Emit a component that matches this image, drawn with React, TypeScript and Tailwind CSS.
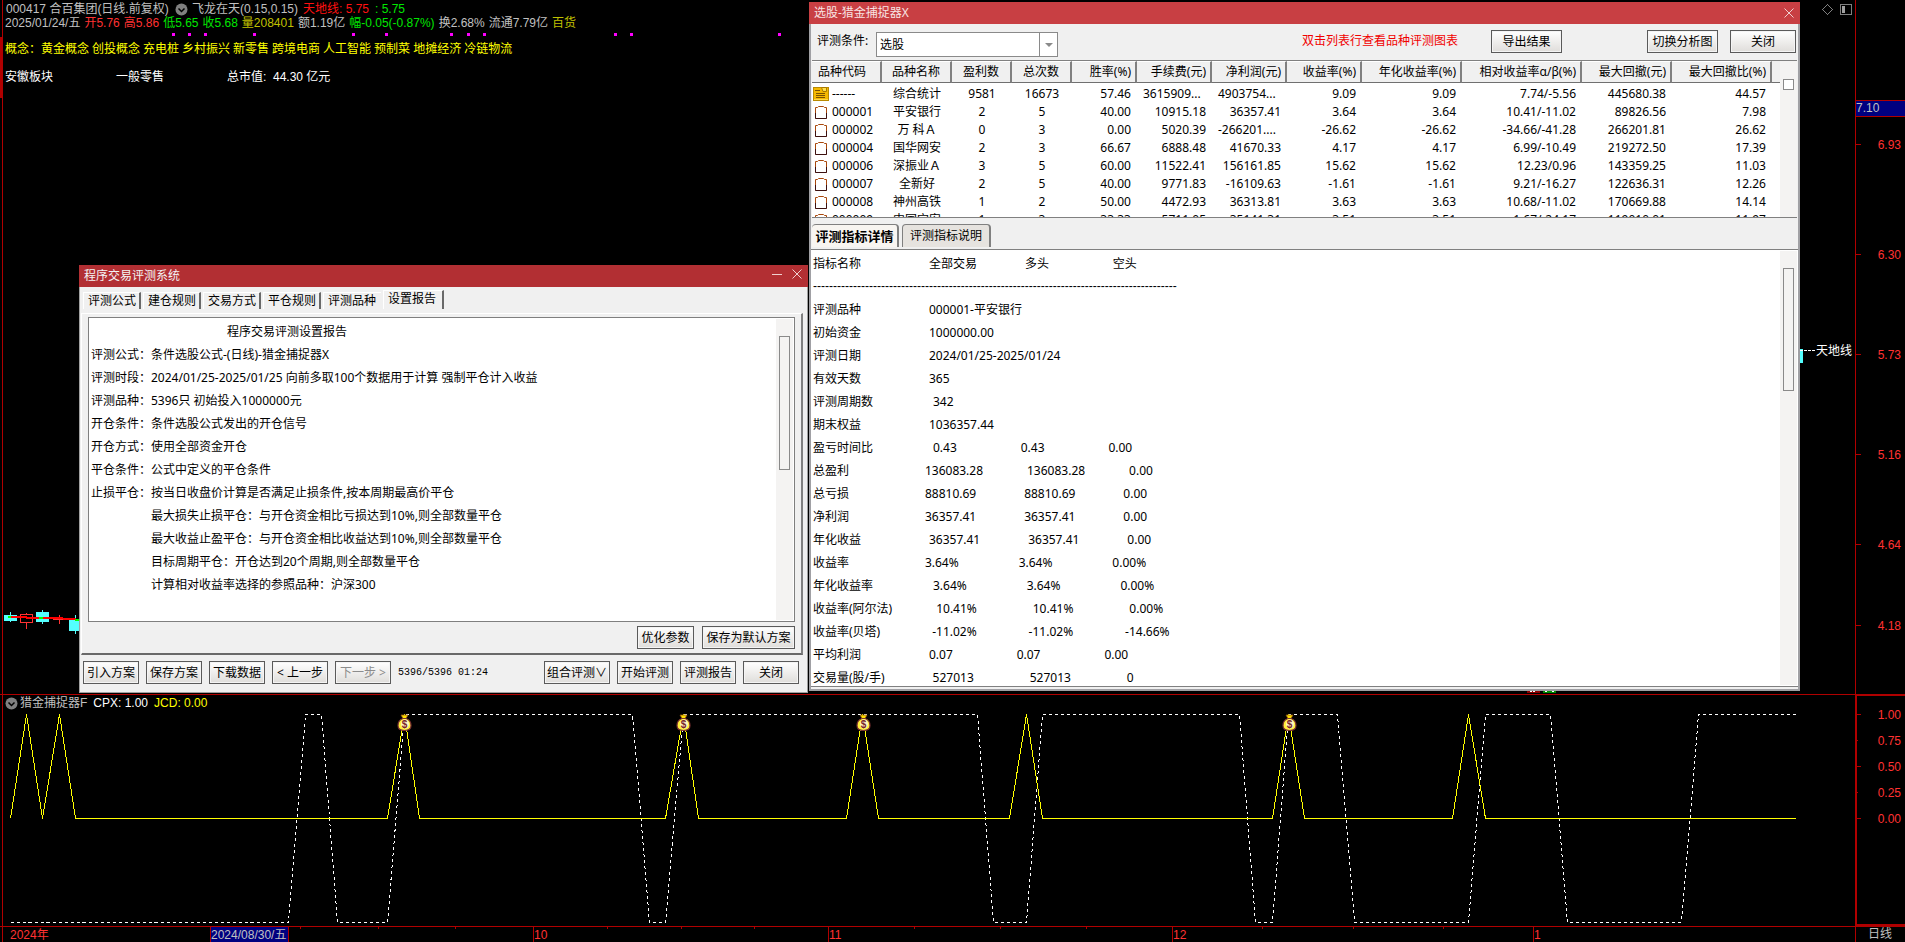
import React from 'react';
import clsx from 'clsx';

const priceTicks = [
  { y: 144, label: '6.93' },
  { y: 254, label: '6.30' },
  { y: 354, label: '5.73' },
  { y: 454, label: '5.16' },
  { y: 544, label: '4.64' },
  { y: 625, label: '4.18' },
];

const signalTicks = [
  { y: 20, label: '1.00', size: 5 },
  { y: 46, label: '0.75', size: 2 },
  { y: 72, label: '0.50', size: 5 },
  { y: 98, label: '0.25', size: 2 },
  { y: 124, label: '0.00', size: 5 },
];

const dots = [172, 188, 204, 253, 352, 385, 450, 467, 483, 614, 630, 778];

const jcdLine =
  '10,124 26,20 42,124 59,20 75,124 387,124 404,20 419,124 665,124 683,20 698,124 846,124 862,20 878,124 1009,124 1026,20 1042,124 1272,124 1288,20 1304,124 1452,124 1468,20 1485,124 1795,124';

const cpxLine =
  '10,228 288,228 305,20 321,20 337,228 387,228 404,20 632,20 649,228 665,228 683,20 977,20 993,228 1026,228 1042,20 1239,20 1255,228 1272,228 1288,20 1337,20 1354,228 1468,228 1485,20 1550,20 1567,228 1681,228 1698,20 1795,20';

const bags = [404, 683, 863, 1289];

const minorTicks = [300, 378, 455, 607, 681, 754, 914, 1000, 1086, 1262, 1353, 1443];
const months = [
  { x: 533, label: '10' },
  { x: 828, label: '11' },
  { x: 1172, label: '12' },
  { x: 1533, label: '1' },
];

const concepts = ['黄金概念', '创投概念', '充电桩', '乡村振兴', '新零售', '跨境电商', '人工智能', '预制菜', '地摊经济', '冷链物流'];

const quote = [
  { text: '2025/01/24/五', color: 'text-[#c0c0c0]' },
  { text: '开5.76', color: 'text-[#ff3232]' },
  { text: '高5.86', color: 'text-[#ff3232]' },
  { text: '低5.65', color: 'text-[#00e600]' },
  { text: '收5.68', color: 'text-[#00e600]' },
  { text: '量208401', color: 'text-[#c0c000]' },
  { text: '额1.19亿', color: 'text-[#c0c0c0]' },
  { text: '幅-0.05(-0.87%)', color: 'text-[#00e600]' },
  { text: '换2.68%', color: 'text-[#c0c0c0]' },
  { text: '流通7.79亿', color: 'text-[#c0c0c0]' },
  { text: '百货', color: 'text-[#c0c000]' },
];

const wizardTabs = ['评测公式', '建仓规则', '交易方式', '平仓规则', '评测品种', '设置报告'];

const settings = [
  '评测公式：条件选股公式-(日线)-猎金捕捉器X',
  '评测时段：2024/01/25-2025/01/25 向前多取100个数据用于计算 强制平仓计入收益',
  '评测品种：5396只 初始投入1000000元',
  '开仓条件：条件选股公式发出的开仓信号',
  '开仓方式：使用全部资金开仓',
  '平仓条件：公式中定义的平仓条件',
  '止损平仓：按当日收盘价计算是否满足止损条件,按本周期最高价平仓',
];

const stopRules = [
  '最大损失止损平仓：与开仓资金相比亏损达到10%,则全部数量平仓',
  '最大收益止盈平仓：与开仓资金相比收益达到10%,则全部数量平仓',
  '目标周期平仓：开仓达到20个周期,则全部数量平仓',
  '计算相对收益率选择的参照品种：沪深300',
];

const columns = [
  { title: '品种代码', width: 'w-[70px]', align: 'text-left' },
  { title: '品种名称', width: 'w-[70px]', align: 'text-center' },
  { title: '盈利数', width: 'w-[60px]', align: 'text-center' },
  { title: '总次数', width: 'w-[60px]', align: 'text-center' },
  { title: '胜率(%)', width: 'w-[65px]', align: 'text-right' },
  { title: '手续费(元)', width: 'w-[75px]', align: 'text-right' },
  { title: '净利润(元)', width: 'w-[75px]', align: 'text-right' },
  { title: '收益率(%)', width: 'w-[75px]', align: 'text-right' },
  { title: '年化收益率(%)', width: 'w-[100px]', align: 'text-right' },
  { title: '相对收益率α/β(%)', width: 'w-[120px]', align: 'text-right' },
  { title: '最大回撤(元)', width: 'w-[90px]', align: 'text-right' },
  { title: '最大回撤比(%)', width: 'w-[100px]', align: 'text-right' },
];

const rows = [
  ['------', '综合统计', '9581', '16673', '57.46', '3615909...', '4903754...', '9.09', '9.09', '7.74/-5.56', '445680.38', '44.57'],
  ['000001', '平安银行', '2', '5', '40.00', '10915.18', '36357.41', '3.64', '3.64', '10.41/-11.02', '89826.56', '7.98'],
  ['000002', '万 科Ａ', '0', '3', '0.00', '5020.39', '-266201....', '-26.62', '-26.62', '-34.66/-41.28', '266201.81', '26.62'],
  ['000004', '国华网安', '2', '3', '66.67', '6888.48', '41670.33', '4.17', '4.17', '6.99/-10.49', '219272.50', '17.39'],
  ['000006', '深振业Ａ', '3', '5', '60.00', '11522.41', '156161.85', '15.62', '15.62', '12.23/0.96', '143359.25', '11.03'],
  ['000007', '全新好', '2', '5', '40.00', '9771.83', '-16109.63', '-1.61', '-1.61', '9.21/-16.27', '122636.31', '12.26'],
  ['000008', '神州高铁', '1', '2', '50.00', '4472.93', '36313.81', '3.63', '3.63', '10.68/-11.02', '170669.88', '14.14'],
  ['000009', '中国宝安', '1', '3', '33.33', '5711.05', '35141.31', '3.51', '3.51', '1.67/-24.17', '119010.01', '11.97'],
];

const details = [
  ['指标名称', '全部交易', '多头', '空头'],
  ['-'.repeat(91)],
  ['评测品种', '000001-平安银行'],
  ['初始资金', '1000000.00'],
  ['评测日期', '2024/01/25-2025/01/24'],
  ['有效天数', '365'],
  ['评测周期数', '342'],
  ['期末权益', '1036357.44'],
  ['盈亏时间比', '0.43', '0.43', '0.00'],
  ['总盈利', '136083.28', '136083.28', '0.00'],
  ['总亏损', '88810.69', '88810.69', '0.00'],
  ['净利润', '36357.41', '36357.41', '0.00'],
  ['年化收益', '36357.41', '36357.41', '0.00'],
  ['收益率', '3.64%', '3.64%', '0.00%'],
  ['年化收益率', '3.64%', '3.64%', '0.00%'],
  ['收益率(阿尔法)', '10.41%', '10.41%', '0.00%'],
  ['收益率(贝塔)', '-11.02%', '-11.02%', '-14.66%'],
  ['平均利润', '0.07', '0.07', '0.00'],
  ['交易量(股/手)', '527013', '527013', '0'],
];

// CJK characters take two cells, the fields are padded like %-25s / %-20s
const cells = (s: string) => [...s].reduce((n, c) => n + (c.charCodeAt(0) > 255 ? 2 : 1), 0);
const pad = (s: string, n: number) => s + '\u2004'.repeat(Math.max(0, n - cells(s)));
const formatLine = (line: string[]) =>
  line.map((s, i) => (i === line.length - 1 ? s : pad(s, i === 0 ? 25 : 20))).join('');

const Btn: React.FC<React.ButtonHTMLAttributes<HTMLButtonElement>> = ({ className, ...props }) => (
  <button
    type="button"
    className={clsx(
      'h-[23px] shrink-0 border border-[#5a5a5a] bg-linear-to-b from-white to-[#dfddda] text-center leading-[20px] whitespace-nowrap text-black ring-1 ring-inset ring-[#f4f4f4] disabled:text-[#8c8c8c]',
      className
    )}
    {...props}
  />
);

const Chevron = () => (
  <svg width="13" height="13" viewBox="0 0 13 13" className="shrink-0">
    <circle cx="6.5" cy="6.5" r="6" fill="#808080" />
    <path d="M3.5 5.5 L6.5 8.5 L9.5 5.5" fill="none" stroke="#000" strokeWidth="1.5" />
  </svg>
);

const CloseIcon = () => (
  <svg width="10" height="10" viewBox="0 0 10 10">
    <path d="M0.5 0.5 L9.5 9.5 M9.5 0.5 L0.5 9.5" stroke="#f0d0d0" strokeWidth="1" />
  </svg>
);

const SummaryIcon = () => (
  <svg width="16" height="14" viewBox="0 0 16 14" className="shrink-0">
    <rect x="0.5" y="0.5" width="15" height="13" fill="#f5b800" stroke="#b98a00" />
    <path d="M8.5 0.5 H13.5 V4.5 H10 Z" fill="#ffe04a" stroke="#a87800" />
    <path d="M2 3.5 H7 M3 6.5 H12 M3 8.5 H12 M3 10.5 H12" stroke="#7a5200" />
    <path d="M1 12.5 H15" stroke="#ffd84a" />
  </svg>
);

const ClipIcon = () => (
  <svg width="16" height="14" viewBox="0 0 16 14" className="shrink-0">
    <path d="M2.5 13.5 V2.5 H4.5 L5.5 1.5 H10.5 L11.5 2.5 H13.5 V13.5" fill="#fff" stroke="#a8480c" />
    <path d="M2.5 8 V13.5 H13.5 V8" fill="none" stroke="#3c1010" />
  </svg>
);

const MoneyBag = ({ x }: { x: number }) => (
  <g transform={`translate(${x - 6.5} 20)`}>
    <path d="M3.5 1 H10.5 L8.5 4.5 H5.5 Z" fill="#ffe000" stroke="#8a5010" strokeWidth="0.8" />
    <path d="M5.5 4.5 C2.5 5.5 0.5 8.5 0.5 11.5 C0.5 15 3 16.5 7 16.5 C11 16.5 13.5 15 13.5 11.5 C13.5 8.5 11.5 5.5 8.5 4.5 Z" fill="#fff03c" stroke="#7a3030" strokeWidth="1.2" />
    <ellipse cx="7.5" cy="10" rx="4" ry="4.5" fill="#fff4c4" />
    <text x="7" y="14" textAnchor="middle" fontSize="10" fontWeight="bold" fill="#7a2828">$</text>
  </g>
);

const MainChart = () => (
  <section className="flex min-h-0 flex-1">
    <div className="relative min-w-0 flex-1">
      <svg className="absolute inset-0 h-full w-full" shapeRendering="crispEdges">
        <rect x="0" y="37" width="2" height="61" fill="#b00000" />
        <rect x="2" y="0" width="1" height="694" fill="#b00000" />
        {dots.map(x => (
          <rect key={x} x={x} y="33" width="3" height="3" fill="#ff00ff" />
        ))}
        {/* candles */}
        <rect x="10" y="612" width="1" height="10" fill="#54ffff" />
        <rect x="4" y="615" width="13" height="6" fill="#54ffff" />
        <path d="M26.5 613 V614 M26.5 622 V629" stroke="#ff3232" />
        <rect x="20.5" y="614.5" width="12" height="8" fill="none" stroke="#ff3232" />
        <rect x="42" y="610" width="1" height="14" fill="#54ffff" />
        <rect x="36" y="612" width="13" height="10" fill="#54ffff" />
        <path d="M53 619.5 H66 M59.5 615 V624" stroke="#ff3232" />
        <rect x="75" y="615" width="1" height="19" fill="#54ffff" />
        <rect x="69" y="619" width="13" height="12" fill="#54ffff" />
        <path d="M10 617 H26 L27 618 H49 L76 619" fill="none" stroke="#ff0000" strokeWidth="2" />
        <path d="M8 617 H11 M39 618 H43 M75 620 H79" stroke="#00ff00" strokeWidth="2" />
        <rect x="1800" y="349" width="3" height="14" fill="#54ffff" />
        <path d="M1800 350.5 H1815" stroke="#fff" strokeDasharray="3 1" />
        <text x="1816" y="355" fill="#fff">天地线</text>
        <rect x="1527" y="690" width="13" height="3" fill="#8b0000" />
        <rect x="1543" y="690" width="13" height="3" fill="#008b00" />
        <path d="M1530 691.5 H1535 M1545 691.5 H1548 M1552 691.5 H1555" stroke="#fff" strokeDasharray="2 1" />
        {/* toolbar glyphs */}
        <g fill="none" stroke="#808080">
          <path d="M1827.5 4.5 L1832.5 9.5 L1827.5 14.5 L1822.5 9.5 Z" />
          <rect x="1840.5" y="4.5" width="11" height="10" rx="1" strokeWidth="1.5" />
        </g>
        <rect x="1842" y="6" width="3" height="7" fill="#a0a0a0" />
      </svg>

      <header className="relative pl-[5px] pt-0.5 leading-[14px] whitespace-nowrap">
        <div className="flex items-center pl-px">
          <span className="w-[169px] text-[#c0c0c0]">000417 合百集团(日线.前复权)</span>
          <Chevron />
          <span className="w-[115px] pl-1 text-[#c0c0c0]">飞龙在天(0.15,0.15)</span>
          <span className="w-[72px] text-[#ff1010]">天地线: 5.75</span>
          <span className="text-[#00e600]">: 5.75</span>
        </div>
        <div className="flex gap-1">
          {quote.map(q => (
            <span key={q.text} className={q.color}>{q.text}</span>
          ))}
        </div>
        <div className="mt-3 flex gap-[3px] text-[#ffff00]">
          <span className="w-[33px]">概念：</span>
          {concepts.map(c => (
            <span key={c}>{c}</span>
          ))}
        </div>
        <div className="mt-3.5 flex text-white">
          <span className="w-[111px]">安徽板块</span>
          <span className="w-[111px]">一般零售</span>
          <span>总市值:&nbsp; 44.30 亿元</span>
        </div>
      </header>
    </div>

    <svg className="w-[50px] shrink-0 self-stretch" shapeRendering="crispEdges">
      <rect x="0" y="0" width="1" height="100%" fill="#b00000" />
      <rect x="1" y="100" width="49" height="17" fill="#000080" />
      <path d="M0 100.5 H50 M0 116.5 H50" stroke="#b00000" />
      <text x="1" y="112" fill="#c0c0c0">7.10</text>
      {priceTicks.map(t => (
        <g key={t.label}>
          <rect x="1" y={t.y} width="5" height="1" fill="#b00000" />
          <text x="46" y={t.y + 5} textAnchor="end" fill="#ff3232">{t.label}</text>
        </g>
      ))}
    </svg>
  </section>
);

const SignalChart = () => (
  <section className="flex h-[232px] shrink-0">
    <div className="relative min-w-0 flex-1 border-t border-[#b00000]">
      <svg className="absolute inset-x-0 -top-px h-[232px] w-full">
        <rect x="2" y="0" width="1" height="232" fill="#b00000" />
        <polyline points={cpxLine} transform="translate(0.5 0.5)" fill="none" stroke="#fff" strokeDasharray="3 3" shapeRendering="crispEdges" />
        <polyline points={jcdLine} transform="translate(0.5 0.5)" fill="none" stroke="#ffff00" shapeRendering="crispEdges" />
        {bags.map(x => (
          <MoneyBag key={x} x={x} />
        ))}
      </svg>
      <div className="relative flex items-center gap-1.5 pt-px pl-[5px] leading-[15px] whitespace-nowrap">
        <span className="flex items-center gap-0.5 text-[#c0c0c0]">
          <Chevron />
          猎金捕捉器F
        </span>
        <span className="text-white">CPX: 1.00</span>
        <span className="text-[#ffff00]">JCD: 0.00</span>
      </div>
    </div>
    <svg className="w-[50px] shrink-0 self-stretch" shapeRendering="crispEdges">
      <path d="M50 1 H1 V231 H50" fill="none" stroke="#b00000" strokeWidth="2" />
      {signalTicks.map(t => (
        <g key={t.label}>
          <rect x="1" y={t.y} width={t.size} height="1" fill="#b00000" />
          <text x="46" y={t.y + 5} textAnchor="end" fill="#ff3232">{t.label}</text>
        </g>
      ))}
    </svg>
  </section>
);

const TimeAxis = () => (
  <footer className="flex h-4 shrink-0 border-t border-[#b00000]">
    <svg className="h-[15px] min-w-0 flex-1" shapeRendering="crispEdges">
      <rect x="2" y="0" width="1" height="15" fill="#b00000" />
      <text x="10" y="12" fill="#ff3232">2024年</text>
      <rect x="210" y="0" width="79" height="15" fill="#000080" />
      <path d="M210.5 0 V15 M288.5 0 V15" stroke="#b00000" />
      <text x="211" y="12" fill="#c0c0c0">2024/08/30/五</text>
      {minorTicks.map(x => (
        <rect key={x} x={x} y="0" width="1" height="2" fill="#b00000" />
      ))}
      {months.map(m => (
        <g key={m.label}>
          <rect x={m.x} y="0" width="1" height="15" fill="#b00000" />
          <text x={m.x + 1} y="12" fill="#ff3232">{m.label}</text>
        </g>
      ))}
    </svg>
    <div className="w-[50px] border-l border-[#b00000] pl-3 leading-[15px] text-[#c0c0c0]">日线</div>
  </footer>
);

const WizardWindow = () => (
  <div className="absolute top-[265px] left-[79px] flex h-[428px] w-[729px] flex-col bg-[#f0f0f0] font-['Noto_Sans','Noto_Sans_CJK_SC',sans-serif] text-black">
    <div className="flex h-[22px] items-center justify-between bg-[#b22f33] pr-[6px] pl-[5px] text-[#f4f4f4]">
      <span>程序交易评测系统</span>
      <div className="flex items-center gap-2.5 pb-1">
        <button type="button" aria-label="最小化" className="h-px w-[10px] bg-[#f0d0d0]" />
        <button type="button" aria-label="关闭窗口"><CloseIcon /></button>
      </div>
    </div>
    <div className="flex min-h-0 flex-1 flex-col border-r border-b border-l border-[#a0a0a0]">
      <div role="tablist" className="flex h-[22px] items-end pl-[3px]">
        {wizardTabs.map((t, i) => (
          <button
            key={t}
            type="button"
            role="tab"
            aria-selected={i === 5}
            className={clsx(
              'border-t border-l border-white text-left leading-[16px]',
              i === 5
                ? 'h-[19px] w-[61px] border-r-2 border-r-[#696969] pb-[2px] pl-1'
                : 'mr-0.5 h-[17px] w-[58px] pl-1',
              i < 4 && 'border-r-2 border-r-[#696969]'
            )}
          >
            {t}
          </button>
        ))}
      </div>
      <div className="mt-1 mr-1 ml-px flex h-[342px] flex-col border-t border-r-2 border-b-2 border-l border-t-white border-r-[#808080] border-b-[#696969] border-l-white pt-[3px] pr-[6px] pl-[6px]">
        <div className="flex h-[305px] border border-[#7f7f7f] bg-white">
          <div className="min-w-0 flex-1 pt-0.5 pl-0.5 leading-[23px] whitespace-nowrap">
            <p className="pl-[136px]">程序交易评测设置报告</p>
            {settings.map(s => (
              <p key={s}>{s}</p>
            ))}
            {stopRules.map(s => (
              <p key={s} className="pl-[60px]">{s}</p>
            ))}
          </div>
          <div className="m-px w-[17px] bg-[#f4f3f2] pt-[17px] pl-[3px]">
            <div className="h-[134px] w-[11px] border border-[#8a8a8a]" />
          </div>
        </div>
        <div className="mt-1 flex justify-end gap-2">
          <Btn className="w-[57px]">优化参数</Btn>
          <Btn className="w-[93px]">保存为默认方案</Btn>
        </div>
      </div>
      <div className="flex items-center gap-[7px] pt-[6px] pr-[8px] pl-[3px]">
        <Btn className="w-[56px]">引入方案</Btn>
        <Btn className="w-[56px]">保存方案</Btn>
        <Btn className="w-[56px]">下载数据</Btn>
        <Btn className="w-[56px]">&lt; 上一步</Btn>
        <Btn className="w-[56px]" disabled>下一步 &gt;</Btn>
        <span className="flex-1 font-['Liberation_Mono',monospace] text-[10px]">5396/5396 01:24</span>
        <Btn className="w-[66px]">组合评测∨</Btn>
        <Btn className="w-[56px]">开始评测</Btn>
        <Btn className="w-[56px]">评测报告</Btn>
        <Btn className="w-[56px]">关闭</Btn>
      </div>
    </div>
  </div>
);

const ResultTable = () => (
  <div className="flex h-[158px] overflow-hidden border-y border-[#808080] bg-white">
    <div className="min-w-0 flex-1 overflow-hidden">
      <table className="w-full table-fixed border-separate border-spacing-0">
        <thead>
          <tr className="h-[22px]">
            {columns.map(c => (
              <th
                key={c.title}
                className={clsx(
                  'border-t border-r-2 border-b border-t-white border-r-[#808080] border-b-[#707070] bg-[#f0f0f0] p-0 font-normal whitespace-nowrap',
                  c.width,
                  c.align,
                  c.align === 'text-right' && 'pr-[4px]',
                  c.align === 'text-left' && 'pl-[6px]'
                )}
              >
                {c.title}
              </th>
            ))}
            <th aria-label="空" className="border-b border-[#707070] bg-[#f0f0f0]" />
          </tr>
        </thead>
        <tbody className="before:block before:h-0.5 before:content-['']">
          {rows.map((r, ri) => (
            <tr key={r[0]} className="h-[18px]">
              {r.map((v, i) => (
                <td
                  key={i}
                  className={clsx(
                    'p-0 leading-[18px] whitespace-nowrap',
                    v.endsWith('...') ? 'pl-[6px] text-left' : columns[i].align,
                    i > 3 && !v.endsWith('...') && 'pr-[6px]'
                  )}
                >
                  {i === 0 ? (
                    <span className="flex items-center gap-[3px] pl-px">
                      {ri === 0 ? <SummaryIcon /> : <ClipIcon />}
                      {v}
                    </span>
                  ) : (
                    v
                  )}
                </td>
              ))}
              <td />
            </tr>
          ))}
        </tbody>
      </table>
    </div>
    <div className="w-[17px] bg-[#f4f3f2] pt-[18px] pl-[3px]">
      <div className="h-[11px] w-[11px] border border-[#8a8a8a] bg-white" />
    </div>
  </div>
);

const ResultWindow = () => (
  <div className="absolute top-0.5 left-[809px] flex h-[689px] w-[991px] flex-col bg-[#f0f0f0] font-['Noto_Sans','Noto_Sans_CJK_SC',sans-serif] text-black">
    <div className="flex h-[22px] items-center justify-between bg-[#c83f43] pr-[6px] pl-[5px] text-[#f8e4e4]">
      <span>选股-猎金捕捉器X</span>
      <button type="button" aria-label="关闭窗口"><CloseIcon /></button>
    </div>
    <div className="flex min-h-0 flex-1 flex-col border-x-2 border-b-2 border-[#a0a0a4] pb-0.5">
      <div className="flex h-9 items-start pt-[6px] pr-0.5 pl-[6px] leading-[22px]">
        <label htmlFor="condition" className="w-[59px]">评测条件:</label>
        <div className="relative mt-0.5">
          <select
            id="condition"
            defaultValue="选股"
            className="block h-[25px] w-[182px] appearance-none rounded-none border border-[#8a8a8a] bg-white pl-[3px]"
          >
            <option>选股</option>
          </select>
          <span className="pointer-events-none absolute top-0 right-0 flex h-[25px] w-[19px] items-center justify-center border border-[#8a8a8a]">
            <svg width="8" height="4" viewBox="0 0 8 4">
              <path d="M0 0 H8 L4 4 Z" fill="#8a8a8a" />
            </svg>
          </span>
        </div>
        <span className="ml-auto text-[#f00000]">双击列表行查看品种评测图表</span>
        <Btn className="ml-[33px] w-[71px]">导出结果</Btn>
        <Btn className="ml-[85px] w-[71px]">切换分析图</Btn>
        <Btn className="ml-3 w-[66px]">关闭</Btn>
      </div>
      <div className="pr-px pl-px">
        <ResultTable />
      </div>
      <div role="tablist" className="flex h-[31px] items-start gap-[3px] pt-[6px] pl-px leading-[22px]">
        <button type="button" role="tab" aria-selected className="h-[23px] w-[87px] rounded-t-sm border-t border-r-2 border-[#808080] bg-[#f8f5f1] text-[13px] font-bold">
          评测指标详情
        </button>
        <button type="button" role="tab" className="h-[23px] w-[89px] rounded-t-sm border-t border-r-2 border-l border-[#808080] bg-[#e6e3df]">
          评测指标说明
        </button>
      </div>
      <div className="flex min-h-0 flex-1 overflow-hidden border-y border-[#808080] bg-white">
        <div className="min-w-0 flex-1 pt-0.5 pl-0.5 leading-[23px] whitespace-pre">
          {details.map(line => (
            <p key={line[0]} className={clsx(line.length === 1 && "font-['Liberation_Sans',sans-serif]")}>
              {formatLine(line)}
            </p>
          ))}
        </div>
        <div className="my-px mr-px w-[17px] bg-[#f4f3f2] pt-[17px] pl-[3px]">
          <div className="h-[123px] w-[11px] border border-[#8a8a8a]" />
        </div>
      </div>
    </div>
  </div>
);

export default function App() {
  return (
    <main className="relative flex h-screen flex-col overflow-hidden bg-black font-['Liberation_Sans','Noto_Sans_CJK_SC',sans-serif] text-[12px]">
      <MainChart />
      <SignalChart />
      <TimeAxis />
      <WizardWindow />
      <ResultWindow />
    </main>
  );
}
